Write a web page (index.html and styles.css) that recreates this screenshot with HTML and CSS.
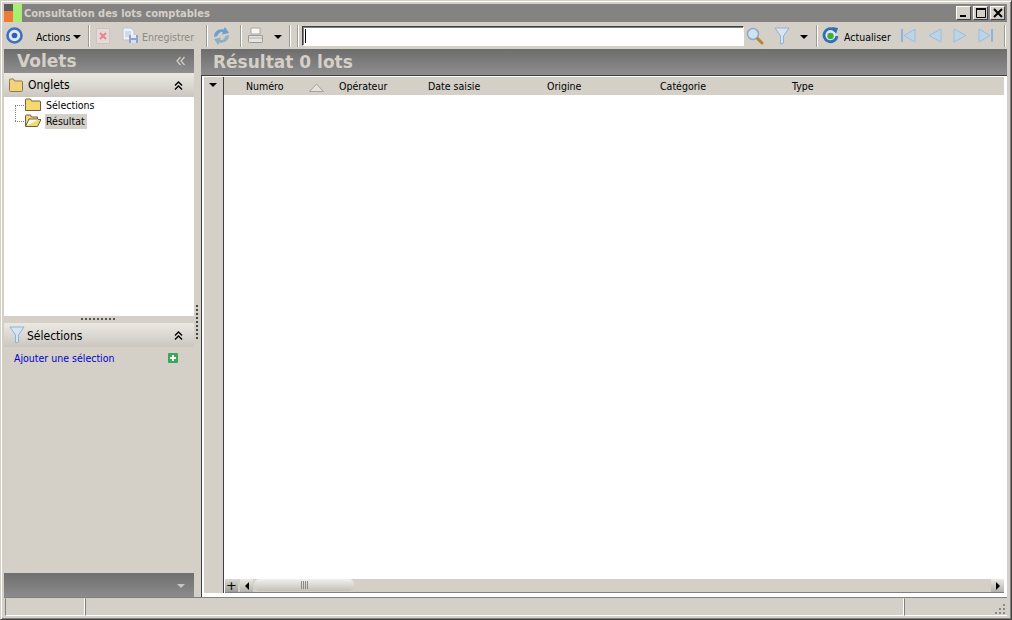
FILE: index.html
```html
<!DOCTYPE html>
<html lang="fr">
<head>
<meta charset="utf-8">
<title>Consultation des lots comptables</title>
<link rel="stylesheet" href="styles.css">
</head>
<body>
<div class="window">
  <header class="titlebar">
    <svg class="applogo" width="18" height="18" viewBox="0 0 18 18"><rect width="9" height="7" x="0" y="0" fill="#5c5c5c"/><rect width="9" height="11" x="0" y="7" fill="#f07a35"/><rect width="9" height="18" x="9" y="0" fill="#a8ee70"/></svg>
    <span class="title">Consultation des lots comptables</span>
    <div class="winbtns">
      <button class="winbtn"><svg width="12" height="12" viewBox="0 0 12 12"><rect x="2" y="8" width="6" height="2" fill="#000"/></svg></button>
      <button class="winbtn"><svg width="12" height="12" viewBox="0 0 12 12"><path d="M1.500 2.500h9v8h-9z" fill="none" stroke="#000" stroke-width="1"/><rect x="1" y="1" width="10" height="2" fill="#000"/></svg></button>
      <button class="winbtn"><svg width="12" height="12" viewBox="0 0 12 12"><path d="M2 2l8 8M10 2l-8 8" stroke="#000" stroke-width="2"/></svg></button>
    </div>
  </header>

  <nav class="toolbar">
    <svg class="ti-home" width="17" height="17" viewBox="0 0 17 17"><circle cx="8.500" cy="8.500" r="7" fill="#dfe7f3" stroke="#3f6fc0" stroke-width="2.600"/><circle cx="8.500" cy="8.500" r="2.800" fill="#2d5db5"/></svg>
    <span class="tb-text actions">Actions</span><i class="caret caret-actions"></i>
    <i class="sep sep-a"></i>
    <svg class="ti-del" width="14" height="16" viewBox="0 0 14 16"><rect x=".5" y=".5" width="13" height="15" fill="#e4dcda" stroke="#cbc4c2"/><rect x="2" y="3" width="10" height="10" fill="#ecd5d5"/><path d="M4 5l6 6M10 5l-6 6" stroke="#dc8a90" stroke-width="2"/></svg>
    <svg class="ti-save" width="17" height="17" viewBox="0 0 17 17"><path d="M1 1h8l3 3v9H1z" fill="#eef1f7" stroke="#b9c3d6"/><path d="M3 5h6M3 7h6M3 9h4" stroke="#b6c2d8"/><rect x="7" y="8" width="9" height="8" fill="#8ea3cf"/><rect x="9" y="8" width="5" height="3" fill="#e8ecf4"/><rect x="9" y="13" width="5" height="3" fill="#d8deea"/></svg>
    <span class="tb-text disabled enreg">Enregistrer</span>
    <i class="sep sep-b"></i>
    <svg class="ti-sync" width="17" height="18" viewBox="0 0 17 18"><path d="M1 10C1 5 5 1.500 10.500 2.500L12 0l4 6-7 1.500 1-2.500C7 4.500 5 6.500 4.500 9z" fill="#6f9fd0"/><path d="M16 8c0 5-4 8.500-9.500 7.500L5 18l-4-6 7-1.500-1 2.500c3 .5 5-1.500 5.500-4z" fill="#8fb0c0"/></svg>
    <i class="sep sep-c"></i>
    <svg class="ti-print" width="17" height="17" viewBox="0 0 17 17"><path d="M4 1h9v6H4z" fill="#f7f7f5" stroke="#aaa8a4"/><path d="M1.500 8.500h14v6q0 1-1 1h-12q-1 0-1-1z" fill="#e6e4e0" stroke="#9c9a96"/><path d="M2 11h13" stroke="#b4b2ae"/></svg>
    <i class="caret caret-print"></i>
    <i class="sep sep-d"></i>
    <i class="sep sep-e"></i>
    <div class="searchbox"><i class="cursor"></i></div>
    <svg class="ti-search" width="18" height="18" viewBox="0 0 18 18"><circle cx="7" cy="7" r="5.500" fill="#cfe2f5" stroke="#8ea9c8" stroke-width="1.500"/><path d="M11.500 11.500l4.500 4.500" stroke="#b8862f" stroke-width="3" stroke-linecap="round"/></svg>
    <svg class="ti-filter" width="16" height="18" viewBox="0 0 16 18"><path d="M1 1h14L9.500 9v7l-3 1V9z" fill="#d6e5f4" stroke="#8fb2d4"/></svg>
    <i class="caret caret-filter"></i>
    <i class="sep sep-f"></i>
    <svg class="ti-refresh" width="17" height="17" viewBox="0 0 17 17"><path d="M13.500 4A6.500 6.500 0 1 0 15 9" fill="#e0e8f0" stroke="#2f6fb4" stroke-width="2.800"/><circle cx="8.500" cy="9" r="3.200" fill="#3dae3d"/><path d="M10 0l6 1-2 6z" fill="#2f6fb4"/></svg>
    <span class="tb-text actualiser">Actualiser</span>
    <svg class="ti-first" width="16" height="15" viewBox="0 0 16 15"><rect x="1" y="1" width="2" height="13" fill="#8fb4dc"/><path d="M15 1v13L4 7.500z" fill="#bcd3ea" stroke="#9abde0"/></svg>
    <svg class="ti-prev" width="15" height="15" viewBox="0 0 15 15"><path d="M14 1v13L2 7.500z" fill="#bcd3ea" stroke="#9abde0"/></svg>
    <svg class="ti-next" width="15" height="15" viewBox="0 0 15 15"><path d="M1 1v13l12-6.500z" fill="#bcd3ea" stroke="#9abde0"/></svg>
    <svg class="ti-last" width="16" height="15" viewBox="0 0 16 15"><path d="M1 1v13l11-6.500z" fill="#bcd3ea" stroke="#9abde0"/><rect x="13" y="1" width="2" height="13" fill="#8fb4dc"/></svg>
    <i class="sep sep-g"></i>
  </nav>

  <main class="main">
    <aside class="left">
      <div class="dark-head"><span class="volets">Volets</span><svg class="collapse" width="9" height="10" viewBox="0 0 9 10"><path d="M4.500 1L1 5l3.500 4M8.500 1L5 5l3.500 4" fill="none" stroke="#d4d0c8" stroke-width="1.200"/></svg></div>
      <div class="light-head">
        <svg class="lh-icon" width="14" height="14" viewBox="0 0 14 14"><path d="M.5 3.500V2q0-1 1-1h3l1 2h7q1 0 1 1v8.500q0 1-1 1h-11q-1 0-1-1z" fill="#f2d27c" stroke="#8f7a3e"/></svg>
        <span class="lh-text">Onglets</span>
        <svg class="chev" width="9" height="10" viewBox="0 0 9 10"><path d="M1 4.500l3.500-3.500 3.500 3.500M1 8.500l3.500-3.500 3.500 3.500" fill="none" stroke="#000" stroke-width="1.400"/></svg>
      </div>
      <div class="tree">
        <div class="tree-row">
          <i class="dots-h"></i>
          <svg width="16" height="14" viewBox="0 0 16 14"><path d="M.5 12.500V2q0-1 1-1h4l1 2h8q1 0 1 1v8.500z" fill="#f6d873" stroke="#6e6236"/></svg>
          <span class="node">Sélections</span>
        </div>
        <div class="tree-row">
          <i class="dots-h"></i><i class="dots-v"></i>
          <svg width="16" height="14" viewBox="0 0 16 14"><path d="M.5 12.500V2q0-1 1-1h4l1 2h6v2H4l-3.500 7.500h12L16 5.500h-3" fill="#f6d873" stroke="#6e6236"/></svg>
          <span class="node selected">Résultat</span>
        </div>
      </div>
      <div class="splitter-h"><i class="grip-h"></i></div>
      <div class="light-head">
        <svg class="lh-icon filter-icon" width="16" height="18" viewBox="0 0 16 18"><path d="M1 1h14L9.500 9v7l-3 1V9z" fill="#d6e5f4" stroke="#8fb2d4"/></svg>
        <span class="lh-text sel">Sélections</span>
        <svg class="chev" width="9" height="10" viewBox="0 0 9 10"><path d="M1 4.500l3.500-3.500 3.500 3.500M1 8.500l3.500-3.500 3.500 3.500" fill="none" stroke="#000" stroke-width="1.400"/></svg>
      </div>
      <div class="sel-body">
        <a class="add-link">Ajouter une sélection</a>
        <svg width="10" height="10" viewBox="0 0 10 10"><rect width="10" height="10" rx="1" fill="#39a85a"/><path d="M5 2v6M2 5h6" stroke="#fff" stroke-width="2"/></svg>
      </div>
      <div class="left-foot"><i class="foot-arrow"></i></div>
    </aside>

    <div class="splitter-v"><i class="grip-v"></i></div>

    <section class="right">
      <div class="dark-head result-head"><span class="result">Résultat 0 lots</span></div>
      <div class="grid">
        <div class="gutter"></div>
        <div class="grid-main">
          <div class="colhead">
            <span>Numéro</span>
            <svg width="15" height="9" viewBox="0 0 15 9"><path d="M.5 8.500h14L7.500 1z" fill="#e4e1db" stroke="#a5a29c"/></svg>
            <span>Opérateur</span>
            <span>Date saisie</span>
            <span>Origine</span>
            <span>Catégorie</span>
            <span>Type</span>
          </div>
          <div class="rows"></div>
        </div>
        <i class="gutter-caret"></i>
        <div class="hscroll">
          <button class="plus">+</button>
          <button class="arrow-btn"><i class="tri-l"></i></button>
          <div class="track"><div class="thumb"><i class="thumb-grip"></i></div></div>
          <button class="arrow-btn"><i class="tri-r"></i></button>
        </div>
      </div>
    </section>
  </main>

  <footer class="status">
    <div class="st st1"></div>
    <div class="st st2"></div>
    <div class="st st3"><svg width="12" height="12" viewBox="0 0 12 12" fill="#8b8984"><rect x="9" y="1" width="2" height="2"/><rect x="9" y="5" width="2" height="2"/><rect x="5" y="5" width="2" height="2"/><rect x="9" y="9" width="2" height="2"/><rect x="5" y="9" width="2" height="2"/><rect x="1" y="9" width="2" height="2"/></svg></div>
  </footer>
</div>
</body>
</html>
```

FILE: styles.css
```css
* { box-sizing: border-box; }
html, body { margin: 0; padding: 0; }
body { width: 1012px; height: 620px; overflow: hidden; background: #d4d0c8; font-family: "DejaVu Sans Condensed", "DejaVu Sans", sans-serif; font-size: 10.5px; color: #000; }

.window { width: 1012px; height: 620px; display: flex; flex-direction: column; background: #d4d0c8; border: 1px solid; border-color: #d4d0c8 #404040 #404040 #d4d0c8; box-shadow: inset 1px 1px 0 #fff, inset -1px -1px 0 #808080; padding: 3px 4px 2px 3px; }

.titlebar { height: 18px; flex: none; background: #858282; display: flex; align-items: center; }
.applogo { flex: none; }
.title { margin-left: 2px; font-family: "DejaVu Sans", sans-serif; font-weight: bold; font-size: 9.9px; color: #d4d0c8; white-space: nowrap; }
.winbtns { margin-left: auto; display: flex; gap: 2px; margin-right: 2px; }
.winbtn { width: 15px; height: 14px; padding: 0; display: flex; align-items: center; justify-content: center; background: #d4d0c8; border: 1px solid; border-color: #fff #404040 #404040 #fff; }

.toolbar { height: 27px; flex: none; display: flex; align-items: center; padding-left: 2px; }
.toolbar svg { flex: none; }
.tb-text { white-space: nowrap; font-size: 10.5px; margin-top: 2px; }
.disabled { color: #8d8a84; }
.sep { flex: none; width: 2px; height: 22px; background: linear-gradient(90deg, #9c9a94 50%, #fff 50%); }
.caret { flex: none; width: 0; height: 0; border-left: 4px solid transparent; border-right: 4px solid transparent; border-top: 4px solid #000; margin-top: 2px; }
.actions { margin-left: 13px; width: 37px; }
.sep-a { margin-left: 7px; }
.ti-del { margin-left: 6px; }
.ti-save { margin-left: 12px; }
.enreg { margin-left: 3px; width: 55px; }
.sep-b { margin-left: 9px; }
.ti-sync { margin-left: 5px; }
.sep-c { margin-left: 10px; }
.ti-print { margin-left: 5px; }
.caret-print { margin-left: 10px; }
.sep-d { margin-left: 7px; }
.sep-e { margin-left: 6px; }
.searchbox { flex: none; margin-left: 3px; width: 442px; height: 20px; background: #fff; border: 1px solid; border-color: #404040 #fff #fff #404040; box-shadow: inset 1px 1px 0 #808080; padding: 2px 0 2px 2px; }
.cursor { display: block; width: 1px; height: 14px; background: #000; }
.ti-search { margin-left: 2px; }
.ti-filter { margin-left: 10px; }
.caret-filter { margin-left: 10px; }
.sep-f { margin-left: 8px; }
.ti-refresh { margin-left: 4px; }
.actualiser { margin-left: 5px; width: 48px; }
.ti-first { margin-left: 8px; }
.ti-prev { margin-left: 11px; }
.ti-next { margin-left: 11px; }
.ti-last { margin-left: 10px; }
.sep-g { margin-left: 10px; }

.main { flex: 1; min-height: 0; display: flex; }

.left { width: 190px; flex: none; display: flex; flex-direction: column; }
.dark-head { height: 24px; flex: none; background: linear-gradient(180deg, #6d6d6d, #8f8d8d); display: flex; align-items: center; justify-content: space-between; }
.volets { margin-left: 13px; font-family: "DejaVu Sans", sans-serif; font-weight: bold; font-size: 17px; color: #d4d0c8; }
.collapse { margin-right: 9px; flex: none; }
.light-head { height: 24px; flex: none; display: flex; align-items: center; background: linear-gradient(180deg, #ece9e3, #cbc7c0); }
.lh-icon { margin-left: 5px; flex: none; }
.lh-text { margin-left: 5px; font-size: 12px; }
.lh-text.sel { margin-left: 2px; margin-top: 2px; }
.chev { margin-left: auto; margin-right: 11px; margin-top: 2px; flex: none; }

.tree { height: 219px; flex: none; background: #fff; padding-left: 11px; }
.tree-row { height: 16px; display: flex; align-items: center; position: relative; padding-left: 10px; }
.tree-row svg { flex: none; }
.dots-h { position: absolute; left: 0; top: 8px; width: 11px; border-top: 1px dotted #808080; }
.dots-v { position: absolute; left: 0; top: -8px; height: 16px; border-left: 1px dotted #808080; }
.node { margin-left: 4px; padding: 1px 2px 1px 1px; line-height: 13px; }
.selected { background: #d4d0c8; }

.splitter-h { height: 7px; flex: none; display: flex; justify-content: center; }
.grip-h { width: 36px; height: 2px; margin-top: 2px; background: repeating-linear-gradient(90deg, #555 0 2px, transparent 2px 4px); }

.sel-body { flex: 1; min-height: 0; display: flex; align-items: flex-start; justify-content: space-between; padding: 5px 16px 0 10px; }
.sel-body svg { margin-top: 1px; }
.add-link { color: #0000d0; line-height: 13px; }
.left-foot { height: 24px; flex: none; background: linear-gradient(180deg, #6f6f6f, #8d8b8b); display: flex; align-items: center; justify-content: flex-end; padding-right: 9px; }
.foot-arrow { width: 0; height: 0; border-left: 4px solid transparent; border-right: 4px solid transparent; border-top: 4px solid #c8c5bf; margin-top: 2px; }

.splitter-v { width: 7px; flex: none; display: flex; align-items: center; justify-content: center; }
.grip-v { width: 2px; height: 36px; margin-left: -1px; background: repeating-linear-gradient(180deg, #444 0 2px, transparent 2px 4px); }

.right { flex: 1; min-width: 0; display: flex; flex-direction: column; }
.result-head { height: 26px; justify-content: flex-start; }
.result { margin-left: 12px; font-family: "DejaVu Sans", sans-serif; font-weight: bold; font-size: 17px; color: #d4d0c8; white-space: nowrap; }

.grid { flex: 1; min-height: 0; position: relative; display: flex; background: #fff; border-top: 1px solid #404040; border-left: 1px solid #404040; padding: 1px 3px 4px 2px; }
.gutter { width: 20px; flex: none; background: #d4d0c8; border-right: 1px solid #404040; }
.gutter-caret { position: absolute; left: 7px; top: 7px; width: 0; height: 0; border-left: 4px solid transparent; border-right: 4px solid transparent; border-top: 4px solid #000; }
.grid-main { flex: 1; min-width: 0; display: flex; flex-direction: column; }
.colhead { height: 18px; flex: none; background: #d4d0c8; display: grid; grid-template-columns: 63px 30px 89px 119px 113px 132px 1fr; align-items: center; padding-left: 22px; }
.colhead svg { margin-top: 2px; }
.rows { flex: 1; background: #fff; }

.hscroll { position: absolute; left: 23px; right: 3px; bottom: 4px; height: 14px; display: flex; background: #d4d0c8; border-bottom: 1px solid #808080; }
.plus, .arrow-btn { width: 13px; height: 13px; padding: 0; flex: none; border: 0; font: 13px/13px "DejaVu Sans", sans-serif; color: #000; display: flex; align-items: center; justify-content: center; }
.plus { position: absolute; left: 0; top: 0; background: linear-gradient(180deg, #dcd9d2, #9f9d98); }
.arrow-btn { background: linear-gradient(180deg, #ece9e3, #b4b2ac); }
.plus + .arrow-btn { margin-left: 15px; }
.tri-l { width: 0; height: 0; border-top: 4px solid transparent; border-bottom: 4px solid transparent; border-right: 4px solid #000; }
.tri-r { width: 0; height: 0; border-top: 4px solid transparent; border-bottom: 4px solid transparent; border-left: 4px solid #000; }
.track { flex: 1; padding: 0 0 0 1px; }
.thumb { width: 100px; height: 12px; border-radius: 5px; background: linear-gradient(180deg, #f2f0ec, #c4c1bb); display: flex; justify-content: center; align-items: center; }
.thumb-grip { width: 7px; height: 8px; background: repeating-linear-gradient(90deg, #8d8a85 0 1px, transparent 1px 2px); }

.status { height: 20px; flex: none; display: flex; border-top: 1px solid #808080; padding: 0 0 1px 1px; }
.st { border: 1px solid; border-color: #d4d0c8 #fff #fff #808080; height: 100%; }
.st1 { width: 80px; }
.st2 { width: 819px; }
.st3 { flex: 1; display: flex; justify-content: flex-end; align-items: flex-end; padding-right: 1px; border-right: 0; }
```
